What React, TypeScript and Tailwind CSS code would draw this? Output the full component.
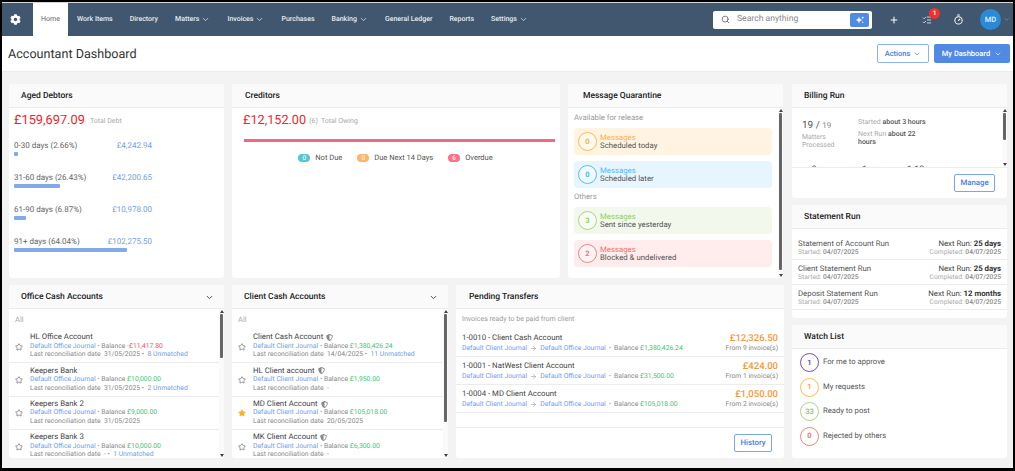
import React from "react";
import { ChevronDown, Search, Plus, Timer, Star, ArrowRight, ListChecks } from "lucide-react";
import { FaCog, FaShieldAlt } from "react-icons/fa";

function Head({ title, chevron, px = "pl-[15px]" }: { title: string; chevron?: boolean; px?: string }) {
  return (
    <div className={`h-[24px] shrink-0 bg-[#fafafa] border-b border-[#ececec] flex items-center justify-between pr-[10px] pt-[2px] ${px}`}>
      <span className="text-[8.5px] font-medium text-[#222] leading-none">{title}</span>
      {chevron && <ChevronDown size={9} strokeWidth={2.5} className="text-[#444]" />}
    </div>
  );
}

function Bar({ top = 0, h }: { top?: number; h: number }) {
  return (
    <div className="w-[5px] shrink-0 flex flex-col items-center bg-[#fafafa] py-[1px]">
      <div className="w-0 h-0 border-x-[2px] border-x-transparent border-b-[3px] border-b-[#444]" />
      <div className="flex-1 w-[3px] flex flex-col">
        <div className="shrink-0" style={{ height: top }} />
        <div className="w-[3px] bg-[#666] rounded-[1px]" style={{ height: h }} />
      </div>
      <div className="w-0 h-0 border-x-[2px] border-x-transparent border-t-[3px] border-t-[#444]" />
    </div>
  );
}

const debtors = [
  ["0-30 days (2.66%)", "£4,242.94", "w-[4px]"],
  ["31-60 days (26.43%)", "£42,200.65", "w-[46px]"],
  ["61-90 days (6.87%)", "£10,978.00", "w-[12px]"],
  ["91+ days (64.04%)", "£102,275.50", "w-[113px]"],
];

function AgedDebtors() {
  return (
    <section className="w-[215px] h-full bg-white rounded-[3px] overflow-hidden flex flex-col">
      <Head title="Aged Debtors" px="pl-[12px]" />
      <div className="pl-[5px] pt-[3px]">
        <div className="flex items-center h-[18px]">
          <span className="text-[12.8px] text-[#fb1c27] leading-none mt-[3px]">£159,697.09</span>
          <span className="text-[7px] text-[#aaa] ml-[5px] mt-[3px]">Total Debt</span>
        </div>
        <div className="mt-[12px] flex flex-col gap-[18px] w-[138px]">
          {debtors.map(([l, v, w]) => (
            <div key={l} className="h-[14px]">
              <div className="flex justify-between items-center h-[9px] text-[8px] leading-none">
                <span className="text-[#666]">{l}</span>
                <span className="text-[#6f9ee8]">{v}</span>
              </div>
              <div className={`h-[4px] mt-[2px] bg-[#82a9e8] rounded-[1px] ${w}`} />
            </div>
          ))}
        </div>
      </div>
    </section>
  );
}

function Pill({ n, c, label }: { n: string; c: string; label: string }) {
  return (
    <div className="flex items-center gap-[5px]">
      <span className={`w-[12px] h-[8px] rounded-full text-white text-[6.5px] leading-none flex items-center justify-center ${c}`}>{n}</span>
      <span className="text-[7.5px] text-[#555] leading-none">{label}</span>
    </div>
  );
}

function Creditors() {
  return (
    <section className="w-[328px] h-full bg-white rounded-[3px] overflow-hidden flex flex-col">
      <Head title="Creditors" px="pl-[13px]" />
      <div className="pl-[11px] pr-[5px] pt-[3px]">
        <div className="flex items-center h-[18px]">
          <span className="text-[12.7px] text-[#fb1c27] leading-none mt-[3px]">£12,152.00</span>
          <span className="text-[7px] text-[#aaa] ml-[3px] mt-[3px]">(6)</span>
          <span className="text-[7px] text-[#aaa] ml-[3px] mt-[3px]">Total Owing</span>
        </div>
        <div className="mt-[10px] h-[3px] bg-[#f0697f] ml-px" />
        <div className="mt-[12px] flex justify-center gap-[15px] pr-[7px]">
          <Pill n="0" c="bg-[#57c6da]" label="Not Due" />
          <Pill n="0" c="bg-[#fdb56c]" label="Due Next 14 Days" />
          <Pill n="6" c="bg-[#f8728a]" label="Overdue" />
        </div>
      </div>
    </section>
  );
}

const msgs = [
  ["0", "Scheduled today", "bg-[#fff4e2]", "border-[#fdbb55]", "text-[#fdb04a]"],
  ["0", "Scheduled later", "bg-[#e7f6fe]", "border-[#57bdf8]", "text-[#4fb9f7]"],
  ["3", "Sent since yesterday", "bg-[#f2f8ec]", "border-[#a9d688]", "text-[#94cc6c]"],
  ["2", "Blocked & undelivered", "bg-[#ffecec]", "border-[#f58383]", "text-[#f47272]"],
];

function Msg({ m }: { m: string[] }) {
  return (
    <div className={`h-[27px] rounded-[4px] flex items-center pl-[4px] ${m[2]}`}>
      <span className={`w-[19px] h-[19px] rounded-full border-[1.2px] bg-white/40 flex items-center justify-center text-[7.5px] font-bold ${m[3]} ${m[4]}`}>{m[0]}</span>
      <div className="ml-[3px] text-[7.8px] leading-[8px]">
        <div className={m[4]}>Messages</div>
        <div className="text-[#555]">{m[1]}</div>
      </div>
    </div>
  );
}

function Quarantine() {
  return (
    <section className="w-[215px] h-full bg-white rounded-[3px] overflow-hidden flex flex-col">
      <Head title="Message Quarantine" />
      <div className="flex flex-1 min-h-0">
        <div className="flex-1 pl-[6px] pr-[6px] pt-[5px]">
          <div className="text-[7.7px] text-[#999] leading-[10px]">Available for release</div>
          <div className="mt-[5px] flex flex-col gap-[6px]">
            <Msg m={msgs[0]} />
            <Msg m={msgs[1]} />
          </div>
          <div className="text-[7.7px] text-[#999] leading-[10px] mt-[4px]">Others</div>
          <div className="mt-[5px] flex flex-col gap-[6px]">
            <Msg m={msgs[2]} />
            <Msg m={msgs[3]} />
          </div>
        </div>
        <Bar h={157} top={1} />
      </div>
    </section>
  );
}

type Acct = { name: string; journal: string; bal: string; neg?: boolean; date: string; un?: string; starred?: boolean };

const office: Acct[] = [
  { name: "HL Office Account", journal: "Default Office Journal", bal: "-£11,417.80", neg: true, date: "31/05/2025", un: "8 Unmatched" },
  { name: "Keepers Bank", journal: "Default Office Journal", bal: "£10,000.00", date: "31/05/2025", un: "2 Unmatched" },
  { name: "Keepers Bank 2", journal: "Default Office Journal", bal: "£9,000.00", date: "31/05/2025" },
  { name: "Keepers Bank 3", journal: "Default Office Journal", bal: "£10,000.00", date: "-", un: "1 Unmatched" },
];
const client: Acct[] = [
  { name: "Client Cash Account", journal: "Default Client Journal", bal: "£1,380,426.24", date: "14/04/2025", un: "11 Unmatched" },
  { name: "HL Client account", journal: "Default Client Journal", bal: "£1,950.00", date: "-" },
  { name: "MD Client Account", journal: "Default Client Journal", bal: "£105,018.00", date: "20/05/2025", starred: true },
  { name: "MK Client Account", journal: "Default Client Journal", bal: "£6,300.00", date: "-" },
];

function Accounts({ title, items, shield, w, thumb }: { title: string; items: Acct[]; shield?: boolean; w: string; thumb: number }) {
  return (
    <section className={`${w} h-full bg-white rounded-[3px] overflow-hidden flex flex-col`}>
      <Head title={title} px="pl-[12px]" chevron />
      <div className="flex flex-1 min-h-0">
        <div className="flex-1 min-w-0 overflow-hidden">
          <div className="h-[21px] pl-[6px] flex items-center text-[7.5px] text-[#aaa]">All</div>
          {items.map((a) => (
            <div key={a.name} className="h-[33.3px] border-b-[1px] border-[#ececec] flex items-center pl-[6px]">
              <Star size={8} strokeWidth={1.6} className={`shrink-0 mt-[1px] ${a.starred ? "text-[#fbb024] fill-[#fbb024]" : "text-[#444]"}`} />
              <div className="ml-[7px] flex flex-col whitespace-nowrap">
                <div className="flex items-center gap-[3px] text-[7.8px] leading-[8.5px] text-[#444]">
                  {a.name}
                  {shield && <FaShieldAlt size={7} className="text-[#888]" />}
                </div>
                <div className="text-[6.8px] leading-[8.5px] text-[#888]">
                  <span className="text-[#6f9ee8]">{a.journal}</span>
                  <span className="text-[#aaa]"> • </span>Balance{" "}
                  <span className={a.neg ? "text-[#f5506c]" : "text-[#3fc57a]"}>{a.bal}</span>
                </div>
                <div className="text-[6.8px] leading-[8.5px] text-[#888]">
                  Last reconciliation date&nbsp; {a.date}
                  {a.un && (
                    <>
                      <span> •&nbsp; </span>
                      <span className="text-[#6f9ee8]">{a.un}</span>
                    </>
                  )}
                </div>
              </div>
            </div>
          ))}
        </div>
        <Bar h={thumb} top={1} />
      </div>
    </section>
  );
}

const transfers = [
  ["1-0010 - Client Cash Account", "£1,380,426.24", "£12,326.50", "From 9 invoice(s)"],
  ["1-0001 - NatWest Client Account", "£31,500.00", "£424.00", "From 1 invoice(s)"],
  ["1-0004 - MD Client Account", "£105,018.00", "£1,050.00", "From 2 invoice(s)"],
];

function OutlineBtn({ children, w }: { children: React.ReactNode; w: string }) {
  return (
    <div className={`${w} h-[18px] border border-[#7da5ea] rounded-[2px] bg-white flex items-center justify-center text-[7.8px] font-medium text-[#4a7bd8] leading-none`}>
      {children}
    </div>
  );
}

function Pending() {
  return (
    <section className="w-[328px] h-full bg-white rounded-[3px] overflow-hidden flex flex-col">
      <Head title="Pending Transfers" px="pl-[13px]" />
      <div className="flex-1 min-h-0">
        <div className="h-[20px] pl-[6px] flex items-center text-[7px] text-[#999]">Invoices ready to be paid from client</div>
        {transfers.map((t) => (
          <div key={t[0]} className="h-[28px] border-b border-[#ececec] px-[6px] flex items-center justify-between">
            <div>
              <div className="text-[7.8px] leading-[10px] text-[#444]">{t[0]}</div>
              <div className="mt-[1px] flex items-center text-[6.8px] leading-[9px] text-[#888]">
                <span className="text-[#6f9ee8]">Default Client Journal</span>
                <ArrowRight size={7} className="mx-[3px] text-[#999]" />
                <span className="text-[#6f9ee8]">Default Office Journal</span>
                <span className="mx-[3px] text-[#aaa]">•</span>
                Balance&nbsp;<span className="text-[#3fc57a]">{t[1]}</span>
              </div>
            </div>
            <div className="text-right">
              <div className="text-[9.5px] font-medium leading-[11px] text-[#f9973a]">{t[2]}</div>
              <div className="text-[6.8px] leading-[9px] text-[#888]">{t[3]}</div>
            </div>
          </div>
        ))}
      </div>
      <div className="h-[31px] shrink-0 border-t border-[#ececec] flex items-center justify-end pr-[12px]">
        <OutlineBtn w="w-[38px]">History</OutlineBtn>
      </div>
    </section>
  );
}

function Billing() {
  return (
    <section className="h-[114px] shrink-0 bg-white rounded-[3px] overflow-hidden flex flex-col">
      <Head title="Billing Run" px="pl-[12px]" />
      <div className="h-[59px] shrink-0 flex">
        <div className="flex-1 overflow-hidden pl-[10px] pt-[12px]">
          <div className="flex">
            <div className="w-[56px] shrink-0">
              <div className="leading-[12px] text-[#555] text-[10px]">19 / <span className="text-[8px] text-[#888]">19</span></div>
              <div className="text-[6.9px] leading-[8px] text-[#aaa] mt-[1px]">Matters<br />Processed</div>
            </div>
            <div className="text-[7px] leading-[8px] text-[#aaa] w-[72px] -mt-[2px]">
              <div>Started <span className="font-medium text-[#555]">about 3 hours</span></div>
              <div className="mt-[4px]">Next Run <span className="font-medium text-[#555]">about 22 hours</span></div>
            </div>
          </div>
          <div className="mt-[17px] flex items-center text-[9px] leading-none text-[#555]">
            <span className="text-[#f9b23a]">●</span><span className="ml-[4px]">0</span>
            <span className="ml-[36px] text-[#8ccb5f]">●</span><span className="ml-[4px]">1</span>
            <span className="ml-[40px]">1 13</span>
          </div>
        </div>
        <Bar h={27} top={1} />
      </div>
      <div className="flex-1 border-t border-[#ececec] flex items-center justify-end pr-[12px]">
        <OutlineBtn w="w-[41px]">Manage</OutlineBtn>
      </div>
    </section>
  );
}

const statements = [
  ["Statement of Account Run", "25 days"],
  ["Client Statement Run", "25 days"],
  ["Deposit Statement Run", "12 months"],
];

function StatementRun() {
  return (
    <section className="h-[113px] shrink-0 bg-white rounded-[3px] overflow-hidden flex flex-col">
      <Head title="Statement Run" px="pl-[12px]" />
      <div className="pt-[6px]">
        {statements.map(([n, v]) => (
          <div key={n} className="h-[25px] border-b border-[#ececec] px-[6px] flex justify-between items-center">
            <div>
              <div className="text-[7.8px] leading-[9px] text-[#555]">{n}</div>
              <div className="text-[6.7px] leading-[8px] text-[#aaa]">Started: <span className="font-medium text-[#888]">04/07/2025</span></div>
            </div>
            <div className="text-right">
              <div className="text-[7.8px] leading-[9px] text-[#444]">Next Run: <span className="font-bold text-[#333]">{v}</span></div>
              <div className="text-[6.7px] leading-[8px] text-[#aaa]">Completed: <span className="font-medium text-[#888]">04/07/2025</span></div>
            </div>
          </div>
        ))}
      </div>
    </section>
  );
}

const watch = [
  ["1", "For me to approve", "border-[#7b4bb0]", "text-[#7b4bb0]"],
  ["1", "My requests", "border-[#fdbb55]", "text-[#fdaa3a]"],
  ["33", "Ready to post", "border-[#a9d688]", "text-[#94cc6c]"],
  ["0", "Rejected by others", "border-[#f58383]", "text-[#f47272]"],
];

function WatchList() {
  return (
    <section className="flex-1 bg-white rounded-[3px] overflow-hidden flex flex-col">
      <Head title="Watch List" px="pl-[12px]" />
      <div className="pl-[8px] pt-[4px] flex flex-col gap-[5.5px]">
        {watch.map(([n, l, b, t]) => (
          <div key={l} className="flex items-center">
            <span className={`w-[19px] h-[19px] rounded-full border-[1.2px] flex items-center justify-center text-[7.5px] font-bold ${b} ${t}`}>{n}</span>
            <span className="ml-[4px] -mt-[1px] text-[7.7px] text-[#555] leading-none">{l}</span>
          </div>
        ))}
      </div>
    </section>
  );
}

const navItems: [string, boolean][] = [
  ["Work Items", false],
  ["Directory", false],
  ["Matters", true],
  ["Invoices", true],
  ["Purchases", false],
  ["Banking", true],
  ["General Ledger", false],
  ["Reports", false],
  ["Settings", true],
];

function Nav() {
  return (
    <header className="h-[33px] shrink-0 bg-[#41566f] flex items-stretch text-white">
      <div className="w-[31px] flex items-center justify-center pr-[5px]">
        <FaCog size={11} className="text-white" />
      </div>
      <div className="w-[35px] bg-white flex items-center justify-center text-[7px] text-[#666]">Home</div>
      <nav className="flex items-center gap-[17px] pl-[9px] text-[7px] font-medium text-[#e6ebf0]">
        {navItems.map(([n, c]) => (
          <span key={n} className="flex items-center gap-[2px] whitespace-nowrap">
            {n}
            {c && <ChevronDown size={9} strokeWidth={2} />}
          </span>
        ))}
      </nav>
      <div className="ml-auto flex items-center">
        <div className="w-[159px] h-[18px] bg-white rounded-[2px] flex items-center pl-[8px] pr-[3px]">
          <Search size={9} className="text-[#555]" strokeWidth={2} />
          <span className="ml-[7px] text-[8.6px] text-[#888] leading-none">Search anything</span>
          <span className="ml-auto w-[19px] h-[14px] rounded-[2px] bg-[#4f8be5] flex items-center justify-center">
            <svg width="10" height="10" viewBox="0 0 10 10" fill="white">
              <path d="M4 1.6 L4.9 4.1 L7.4 5 L4.9 5.9 L4 8.4 L3.1 5.9 L.6 5 L3.1 4.1 Z" />
              <path d="M7.8 1.2 L8.2 2.3 L9.3 2.7 L8.2 3.1 L7.8 4.2 L7.4 3.1 L6.3 2.7 L7.4 2.3 Z" />
              <path d="M7.8 6 L8.1 6.9 L9 7.2 L8.1 7.5 L7.8 8.4 L7.5 7.5 L6.6 7.2 L7.5 6.9 Z" />
            </svg>
          </span>
        </div>
        <Plus size={10} strokeWidth={2.5} className="ml-[17px] text-white" />
        <div className="relative ml-[23px]">
          <ListChecks size={10} strokeWidth={2} className="text-[#e6ebf0]" />
          <span className="absolute -top-[7px] left-[7px] w-[11px] h-[11px] rounded-full bg-[#f5302a] text-white text-[6.5px] font-bold leading-none flex items-center justify-center">1</span>
        </div>
        <Timer size={11} strokeWidth={2.2} className="ml-[21px] text-white" />
        <div className="ml-[16px] w-[21px] h-[21px] rounded-full bg-[#2a8ad6] text-[#e8f2fb] text-[7.5px] font-medium flex items-center justify-center">MD</div>
        <ChevronDown size={7} className="ml-[2px] mr-[3px] text-[#8798ab]" />
      </div>
    </header>
  );
}

export default function App() {
  return (
    <div className="w-[1015px] h-[471px] bg-black overflow-hidden px-[2px] pt-[2px] pb-[3px] font-['Roboto',sans-serif] [text-rendering:geometricPrecision]">
      <div className="w-full h-full bg-[#f3f3f3] flex flex-col border-t border-[#d8d8d8]">
        <Nav />
        <div className="h-[36px] shrink-0 bg-white flex items-center justify-between pl-[6px] pr-[3px] border-b border-[#ededed]">
          <h1 className="text-[12.6px] text-[#333] leading-none mt-[3px]">Accountant Dashboard</h1>
          <div className="flex items-center gap-[5px]">
            <div className="w-[52px] h-[19px] border border-[#8fb0ea] rounded-[2px] bg-white text-[7.5px] font-medium text-[#4a7bd8] flex items-center justify-center gap-[3px]">
              Actions <ChevronDown size={8} />
            </div>
            <div className="w-[76px] h-[19px] rounded-[2px] bg-[#5289e4] text-[7.5px] font-medium text-white flex items-center justify-center gap-[4px]">
              My Dashboard <ChevronDown size={8} />
            </div>
          </div>
        </div>
        <main className="flex-1 min-h-0 flex gap-[8px] pl-[7px] pt-[12px] pb-[10px]">
          <div className="flex flex-col gap-[7px] w-[775px] shrink-0">
            <div className="h-[194px] shrink-0 flex gap-[8px]">
              <AgedDebtors />
              <Creditors />
              <Quarantine />
            </div>
            <div className="flex-1 min-h-0 flex gap-[8px]">
              <Accounts title="Office Cash Accounts" items={office} w="w-[215px]" thumb={44} />
              <Accounts title="Client Cash Accounts" items={client} shield w="w-[216px]" thumb={108} />
              <Pending />
            </div>
          </div>
          <div className="w-[215px] shrink-0 flex flex-col gap-[7px]">
            <Billing />
            <StatementRun />
            <WatchList />
          </div>
        </main>
      </div>
    </div>
  );
}
